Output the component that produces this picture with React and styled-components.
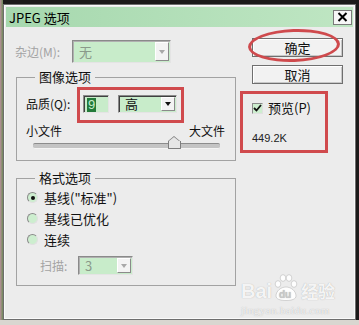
import React from "react";
import styled, { createGlobalStyle } from "styled-components";

const Global = createGlobalStyle`
  html, body { margin: 0; padding: 0; }
  body {
    width: 359px; height: 325px; overflow: hidden;
    background:
      linear-gradient(to bottom, transparent 320px, #d9d6d0 320px),
      linear-gradient(to right, #b8909a 0, #6f8a5a 3px, #1c1a1a 3px);
    font-family: "Noto Sans CJK SC", "Noto Sans", sans-serif;
  }
  #root { width: 359px; height: 325px; }
`;

const Dialog = styled.div`
  position: relative;
  box-sizing: border-box;
  margin: 4px 0 0 3px;
  width: 353px;
  height: 316px;
  border: 1px solid #6e6e6e;
  padding: 2px;
  background: #ececec;
  box-shadow: inset 0 0 0 1px #fafafa;
  display: flex;
  flex-direction: column;
`;

const TitleBar = styled.div`
  height: 20px;
  flex: none;
  display: flex;
  align-items: center;
  justify-content: space-between;
  padding-left: 3px;
  background: linear-gradient(to right, #a6d8ae, #bfe6c3);
  font-size: 13px;
  color: #000;
`;

const CloseBox = styled.div`
  width: 19px;
  height: 15px;
  margin-right: 1px;
  box-sizing: border-box;
  border: 1px solid #7a7a7a;
  background: #f7f7f7;
  display: flex;
  align-items: center;
  justify-content: center;
`;

const Content = styled.div`
  display: grid;
  grid-template-columns: 221px 91px;
  column-gap: 16px;
  align-items: start;
  padding: 13px 0 0 9px;
  font-size: 12px;
  line-height: 14px;
  color: #111;
`;

const LeftCol = styled.div`
  display: flex;
  flex-direction: column;
`;

const RightCol = styled.div`
  display: flex;
  flex-direction: column;
  margin-top: -2px;
`;

const MatteRow = styled.div`
  height: 23px;
  display: flex;
  align-items: center;
`;

const Label = styled.span`
  width: ${(p) => p.$w}px;
  flex: none;
  color: ${(p) => (p.$disabled ? "#a3a3a3" : "#111")};
  white-space: nowrap;
`;

const Select = styled.div`
  box-sizing: border-box;
  width: ${(p) => p.$w}px;
  height: ${(p) => p.$h}px;
  flex: none;
  display: flex;
  align-items: center;
  justify-content: space-between;
  padding-left: 6px;
  border: 1px solid;
  border-color: #8a8a8a #e4e4e4 #e4e4e4 #8a8a8a;
  box-shadow: inset 1px 1px 0 ${(p) => (p.$disabled ? "#b0b0b0" : "#404040")};
  background: #c8ecca;
  color: ${(p) => (p.$disabled ? "#8a9a8a" : "#111")};
  font-size: 13px;
`;

const ArrowBtn = styled.div`
  width: 14px;
  align-self: stretch;
  margin: 1px 1px 1px 0;
  box-sizing: border-box;
  background: #f3f3f3;
  border: 1px solid;
  border-color: #fff #8a8a8a #8a8a8a #fff;
  display: flex;
  align-items: center;
  justify-content: center;
  &::after {
    content: "";
    border-left: 3px solid transparent;
    border-right: 3px solid transparent;
    border-top: 4px solid ${(p) => (p.$disabled ? "#a8a8a8" : "#111")};
  }
`;

const Group = styled.fieldset`
  box-sizing: border-box;
  margin: ${(p) => p.$mt}px 0 0 1px;
  width: 220px;
  height: ${(p) => p.$h}px;
  border: 1px solid #a2a2a2;
  padding: 0;
  min-width: 0;
`;

const Legend = styled.legend`
  margin-left: 18px;
  padding: 0 4px;
  font-size: 13px;
  line-height: 14px;
  color: #111;
`;

const QualityRow = styled.div`
  display: flex;
  align-items: center;
  height: 18px;
  margin-top: 11px;
  padding-left: 9px;
`;

const NumInput = styled.div`
  box-sizing: border-box;
  width: 26px;
  height: 18px;
  margin-right: 9px;
  border: 1px solid;
  border-color: #8a8a8a #e4e4e4 #e4e4e4 #8a8a8a;
  box-shadow: inset 1px 1px 0 #404040;
  background: #c8ecca;
  padding: 1px 0 0 3px;
  display: flex;
  align-items: center;
`;

const Selected = styled.span`
  background: #237a3a;
  color: #c8ecca;
  font-family: "Liberation Sans", sans-serif;
  font-size: 13px;
  line-height: 14px;
  padding: 0 1px;
`;

const SizeLabels = styled.div`
  display: flex;
  justify-content: space-between;
  margin-top: 11px;
  padding: 0 10px 0 9px;
`;

const Track = styled.div`
  position: relative;
  margin: 5px 15px 0 16px;
  height: 4px;
  border-radius: 2px;
  background: #c4c4c4;
  border-top: 1px solid #8c8c8c;
  border-bottom: 1px solid #f4f4f4;
`;

const Thumb = styled.div`
  position: absolute;
  left: 135px;
  top: -3px;
  width: 11px;
  height: 7px;
  background: #e6e6e6;
  border: 1px solid #7e7e7e;
  border-top: none;
  border-radius: 0 0 1px 1px;
  &::before {
    content: "";
    position: absolute;
    left: -1px;
    top: -5px;
    border-left: 6.5px solid transparent;
    border-right: 6.5px solid transparent;
    border-bottom: 5px solid #7e7e7e;
  }
  &::after {
    content: "";
    position: absolute;
    left: 0;
    top: -4px;
    border-left: 5.5px solid transparent;
    border-right: 5.5px solid transparent;
    border-bottom: 4px solid #e6e6e6;
  }
`;

const RadioList = styled.div`
  display: flex;
  flex-direction: column;
  padding: 2px 0 0 10px;
`;

const RadioRow = styled.div`
  height: 21px;
  display: flex;
  align-items: center;
  gap: 6px;
  font-size: 13px;
`;

const RadioDot = styled.span`
  box-sizing: border-box;
  width: 11px;
  height: 11px;
  border-radius: 50%;
  border: 1px solid;
  border-color: #8a8a8a #e0e0e0 #e0e0e0 #8a8a8a;
  background: #cdeecf;
  display: flex;
  align-items: center;
  justify-content: center;
  &::after {
    content: "";
    width: 4px;
    height: 4px;
    border-radius: 50%;
    background: ${(p) => (p.$on ? "#111" : "transparent")};
  }
`;

const ScanRow = styled.div`
  display: flex;
  align-items: center;
  margin-top: 6px;
  padding-left: 23px;
`;

const Button = styled.div`
  box-sizing: border-box;
  height: 19px;
  margin-top: ${(p) => p.$mt || 0}px;
  border: 1px solid #6f6f6f;
  background: #f2f2f2;
  box-shadow: inset 1px 1px 0 #fff, inset -1px -1px 0 #c8c8c8;
  display: flex;
  align-items: center;
  justify-content: center;
  font-size: 13px;
  color: #111;
`;

const CheckRow = styled.div`
  display: flex;
  align-items: center;
  gap: 5px;
  height: 14px;
  margin-top: 17px;
  font-size: 13px;
`;

const CheckBox = styled.span`
  box-sizing: border-box;
  width: 11px;
  height: 11px;
  border: 1px solid;
  border-color: #8a8a8a #e0e0e0 #e0e0e0 #8a8a8a;
  background: #cdeecf;
  display: flex;
  align-items: center;
  justify-content: center;
`;

const FileSize = styled.div`
  margin-top: 16px;
  font-family: "Liberation Sans", sans-serif;
  font-size: 11px;
  color: #222;
`;

const RedEllipse = styled.div`
  position: absolute;
  left: 244px;
  top: 24px;
  width: 92px;
  height: 33px;
  box-sizing: border-box;
  border: 3px solid #cf4a4d;
  border-radius: 50%;
  transform: rotate(-2deg);
`;

const RedRect = styled.div`
  position: absolute;
  left: ${(p) => p.$x}px;
  top: ${(p) => p.$y}px;
  width: ${(p) => p.$w}px;
  height: ${(p) => p.$h}px;
  box-sizing: border-box;
  border: 3px solid #d04a4d;
`;

const Watermark = styled.div`
  position: absolute;
  left: 237px;
  top: 268px;
  color: rgba(255, 255, 255, 0.9);
  text-shadow: 0 0 1px rgba(150, 150, 150, 0.8);
  display: flex;
  flex-direction: column;
  align-items: flex-start;
`;

const WmTop = styled.div`
  display: flex;
  align-items: flex-end;
  font-family: "Liberation Sans", sans-serif;
  font-weight: bold;
  font-size: 20px;
  line-height: 20px;
`;

const WmCn = styled.span`
  font-family: "Noto Sans CJK SC", sans-serif;
  font-size: 17px;
  line-height: 20px;
  font-weight: bold;
  margin-left: 1px;
`;

const WmUrl = styled.div`
  font-family: "Liberation Serif", serif;
  font-size: 11px;
  line-height: 12px;
  margin-top: 3px;
  letter-spacing: 0.4px;
  color: rgba(255, 255, 255, 0.8);
`;

const Paw = () => (
  <svg width="28" height="28" viewBox="0 0 28 28">
    <g fill="rgba(255,255,255,0.92)" stroke="rgba(160,160,160,0.7)" strokeWidth="0.6">
      <ellipse cx="6" cy="11" rx="2.8" ry="3.3" />
      <ellipse cx="11" cy="5" rx="2.8" ry="3.3" />
      <ellipse cx="17" cy="5" rx="2.8" ry="3.3" />
      <ellipse cx="22" cy="11" rx="2.8" ry="3.3" />
      <path d="M4 23c0-5 5-9 10-9s10 4 10 9c0 3-4 4.5-10 4.5S4 26 4 23z" />
    </g>
    <text x="7" y="25" fontSize="10" fontFamily="Liberation Sans" fill="#c8c8c8" fontWeight="bold">du</text>
  </svg>
);

export default function App() {
  return (
    <>
      <Global />
      <Dialog>
        <TitleBar>
          <span>JPEG 选项</span>
          <CloseBox>
            <svg width="11" height="10" viewBox="0 0 11 10">
              <path d="M1.5 1l8 8M9.5 1l-8 8" stroke="#000" strokeWidth="2" />
            </svg>
          </CloseBox>
        </TitleBar>
        <Content>
          <LeftCol>
            <MatteRow>
              <Label $w={57} $disabled>杂边(M):</Label>
              <Select $w={99} $h={23} $disabled>
                <span>无</span>
                <ArrowBtn $disabled />
              </Select>
            </MatteRow>
            <Group $mt={7} $h={91}>
              <Legend>图像选项</Legend>
              <QualityRow>
                <Label $w={57}>品质(Q):</Label>
                <NumInput>
                  <Selected>9</Selected>
                </NumInput>
                <Select $w={59} $h={18}>
                  <span>高</span>
                  <ArrowBtn />
                </Select>
              </QualityRow>
              <SizeLabels>
                <span>小文件</span>
                <span>大文件</span>
              </SizeLabels>
              <Track>
                <Thumb />
              </Track>
            </Group>
            <Group $mt={10} $h={115}>
              <Legend>格式选项</Legend>
              <RadioList>
                <RadioRow>
                  <RadioDot $on />
                  <span>基线("标准")</span>
                </RadioRow>
                <RadioRow>
                  <RadioDot />
                  <span>基线已优化</span>
                </RadioRow>
                <RadioRow>
                  <RadioDot />
                  <span>连续</span>
                </RadioRow>
              </RadioList>
              <ScanRow>
                <Label $w={38} $disabled>扫描:</Label>
                <Select $w={55} $h={19} $disabled>
                  <span>3</span>
                  <ArrowBtn $disabled />
                </Select>
              </ScanRow>
            </Group>
          </LeftCol>
          <RightCol>
            <Button>确定</Button>
            <Button $mt={8}>取消</Button>
            <CheckRow>
              <CheckBox>
                <svg width="9" height="8" viewBox="0 0 9 8">
                  <path d="M1 4l2.5 2.5L8 1" stroke="#111" strokeWidth="1.8" fill="none" />
                </svg>
              </CheckBox>
              <span>预览(P)</span>
            </CheckRow>
            <FileSize>449.2K</FileSize>
          </RightCol>
        </Content>
        <RedEllipse />
        <RedRect $x={73} $y={82} $w={107} $h={36} />
        <RedRect $x={236} $y={86} $w={88} $h={62} />
        <Watermark>
          <WmTop>
            <span>Bai</span>
            <Paw />
            <WmCn>经验</WmCn>
          </WmTop>
          <WmUrl>jingyan.baidu.com</WmUrl>
        </Watermark>
      </Dialog>
    </>
  );
}
